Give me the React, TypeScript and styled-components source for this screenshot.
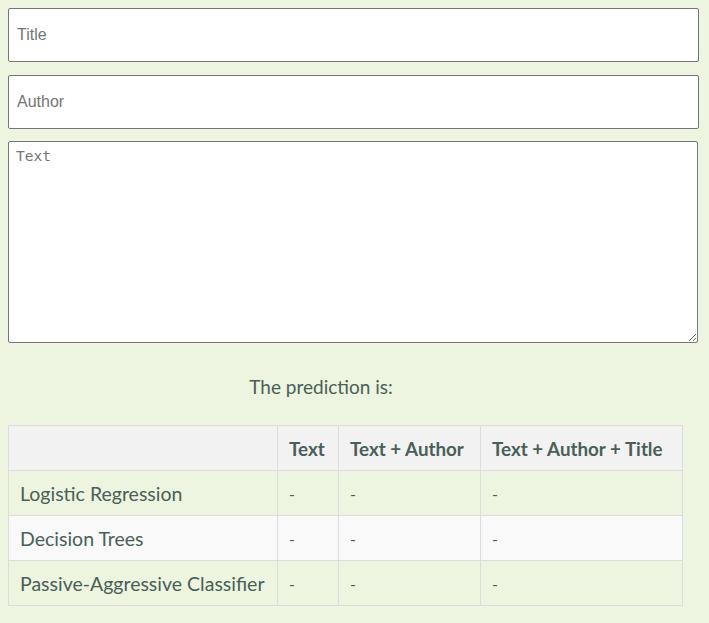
import styled, { createGlobalStyle } from 'styled-components';

const models = ['Logistic Regression', 'Decision Trees', 'Passive-Aggressive Classifier'];
const columns = ['Text', 'Text + Author', 'Text + Author + Title'];

function App() {
  return (
    <>
      <GlobalStyle />
      <Form>
        <Field type="text" placeholder="Title" />
        <Field type="text" placeholder="Author" />
        <TextArea placeholder="Text" />
      </Form>
      <Prediction>The prediction is:</Prediction>
      <Results>
        <colgroup>
          <col style={{ width: 269 }} />
          <col style={{ width: 61 }} />
          <col style={{ width: 142 }} />
          <col style={{ width: 202 }} />
        </colgroup>
        <thead>
          <tr>
            <HeadCell />
            {columns.map((c) => (
              <HeadCell key={c}>{c}</HeadCell>
            ))}
          </tr>
        </thead>
        <tbody>
          {models.map((m, i) => (
            <Row key={m} $striped={i % 2 === 1}>
              <Cell>{m}</Cell>
              {columns.map((c) => (
                <Cell key={c} $small>
                  -
                </Cell>
              ))}
            </Row>
          ))}
        </tbody>
      </Results>
    </>
  );
}

const GlobalStyle = createGlobalStyle`
  body {
    margin: 8px;
    background-color: #edf4df;
    font-family: Lato, "Open Sans", sans-serif;
    color: #4a5f58;
  }
`;

const Form = styled.form`
  display: flex;
  flex-direction: column;
  gap: 13px;
`;

const Field = styled.input`
  box-sizing: border-box;
  width: 691px;
  height: 54px;
  margin: 0;
  padding: 0 8px;
  border: 1px solid #767676;
  border-radius: 2px;
  background: white;
  font-family: "Liberation Sans", Arial, sans-serif;
  font-size: 16px;
  outline: none;

  &::placeholder {
    color: #757575;
  }
`;

const TextArea = styled.textarea`
  box-sizing: border-box;
  width: 690px;
  height: 202px;
  margin: -1px 0 0;
  padding: 6px 7px;
  border: 1px solid #767676;
  border-radius: 2px;
  background: white;
  font-family: "DejaVu Sans Mono", "Liberation Mono", monospace;
  font-size: 14.5px;
  outline: none;

  &::placeholder {
    color: #757575;
  }
`;

const Prediction = styled.p`
  width: 626px;
  margin: 32px 0 27px;
  text-align: center;
  font-size: 19px;
`;

const Results = styled.table`
  width: 675px;
  table-layout: fixed;
  border-collapse: collapse;
  border: 1px solid #dcdcdc;
`;

const HeadCell = styled.th`
  height: 45px;
  padding: 0 11px;
  box-sizing: border-box;
  text-align: left;
  font-size: 18.8px;
  font-weight: 700;
  background-color: #f2f2f2;
  border: 1px solid #dcdcdc;
  white-space: nowrap;
`;

const Row = styled.tr<{ $striped: boolean }>`
  background-color: ${(p) => (p.$striped ? '#f9f9f9' : 'transparent')};
`;

const Cell = styled.td<{ $small?: boolean }>`
  height: 45px;
  padding: 0 11px;
  box-sizing: border-box;
  font-size: ${(p) => (p.$small ? '16px' : '19.5px')};
  border: 1px solid #dcdcdc;
  white-space: nowrap;
`;

export default App;
